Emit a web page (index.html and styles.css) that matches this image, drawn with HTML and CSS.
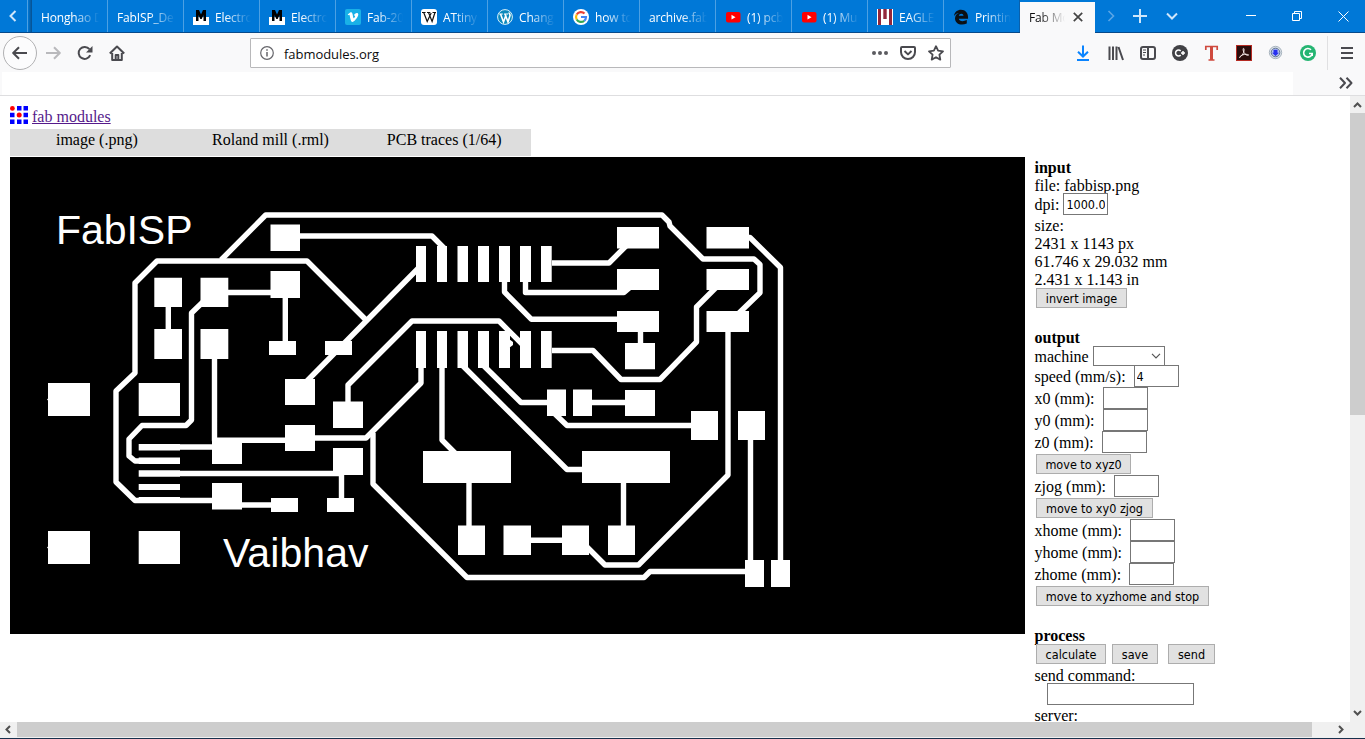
FILE: index.html
```
<!DOCTYPE html>
<html lang="en">
<head>
<meta charset="utf-8">
<title>Fab Modules</title>
<link rel="stylesheet" href="styles.css">
</head>
<body>
<header class="tabs">
  <div class="tabs-back"><svg width="8" height="12" viewBox="0 0 8 12"><path d="M6.5 1 1.5 6l5 5" class="line-light"/></svg></div>
  <div class="tabs-edge"></div>
  <div class="tab"><span class="label">Honghao D</span></div>
  <div class="tab"><span class="label">FabISP_De</span></div>
  <div class="tab"><svg class="fav" viewBox="0 0 16 16"><path d="M0 8h16v8H0z" fill="#fff"/><path d="M3 12V1h3l2 4.500 2-4.500h3v11h-2.500V6L8.700 10H7.300L5.500 6v6z" fill="#000"/></svg><span class="label">Electro</span></div>
  <div class="tab"><svg class="fav" viewBox="0 0 16 16"><path d="M0 8h16v8H0z" fill="#fff"/><path d="M3 12V1h3l2 4.500 2-4.500h3v11h-2.500V6L8.700 10H7.300L5.500 6v6z" fill="#000"/></svg><span class="label">Electro</span></div>
  <div class="tab"><svg class="fav" viewBox="0 0 16 16"><rect width="16" height="16" rx="2" fill="#19b1e7"/><path d="M2.700 5.500 5.500 3.300c1.500-.6 2 .8 2.500 4 .4 2 .7 2.500 1.500 1.200 1-1.500.8-2.400-.7-2 .8-2.700 4.700-3.800 4.500-.7-.3 2.600-4.500 7.500-6 7.300C5.500 12.600 5 7 4.500 5.900c-.3-.5-.8-.1-1.300.3z" fill="#fff"/></svg><span class="label">Fab-20</span></div>
  <div class="tab"><svg class="fav" viewBox="0 0 16 16"><rect width="16" height="16" rx="3" fill="#fff"/><path d="M1 3.500h3.600M6 3.500h3.300M11.500 3.500H15" stroke="#111" fill="none"/><path d="m2.700 3.500 3.500 9L10.200 4M7.500 3.500l3.600 9L14 3.500" stroke="#111" stroke-width="1.200" fill="none"/></svg><span class="label">ATtiny</span></div>
  <div class="tab"><svg class="fav" viewBox="0 0 16 16"><circle cx="8" cy="8" r="7.400" fill="#0d8abc" stroke="#d8f1fb"/><path d="M2.200 5h3.600M7 5h4" stroke="#fff" fill="none"/><path d="m3.500 5 3 8L9 6M8 5l3 8 2-6.500c.3-1-.8-1.500-1-3" stroke="#fff" stroke-width="1.600" fill="none"/></svg><span class="label">Chang</span></div>
  <div class="tab"><svg class="fav" viewBox="0 0 16 16"><circle cx="8" cy="8" r="8" fill="#fff"/><g fill="none" stroke-width="2.200"><path d="M11.500 4.500A5 5 0 0 0 3.700 5.500" stroke="#ea4335"/><path d="M3.700 5.500a5 5 0 0 0 0 5" stroke="#fbbc05"/><path d="M3.700 10.500a5 5 0 0 0 7.500 1.300" stroke="#34a853"/><path d="M11.200 11.800A5 5 0 0 0 13 8H8" stroke="#4285f4"/></g></svg><span class="label">how to</span></div>
  <div class="tab"><span class="label">archive.fab</span></div>
  <div class="tab"><svg class="fav" viewBox="0 0 16 16"><rect x="1" y="3" width="14.500" height="10.500" rx="2" fill="#f00"/><path d="m6.500 5.800 4 2.400-4 2.400z" fill="#fff"/></svg><span class="label">(1) pcb</span></div>
  <div class="tab"><svg class="fav" viewBox="0 0 16 16"><rect x="1" y="3" width="14.500" height="10.500" rx="2" fill="#f00"/><path d="m6.500 5.800 4 2.400-4 2.400z" fill="#fff"/></svg><span class="label">(1) Mu</span></div>
  <div class="tab"><svg class="fav" viewBox="0 0 16 16"><path d="M0 0h16v16H0z" fill="#fff"/><path d="M1 0h3v16H1zM6.300 0h3.400v10H6.300zM12 0h3v16h-3z" fill="#93263a"/></svg><span class="label">EAGLE</span></div>
  <div class="tab tab-last"><svg class="fav" viewBox="0 0 16 16"><path d="M15 9.800H5.800c.3 2.700 4.500 3.200 8 1.300v3.300C8.500 17 2 15 2 9.500c0-2.500 1.500-4.700 4-5.500-2.200.2-4 1.500-5 3C1.500 3 4.500.8 8 .8c4.800 0 7.500 3.700 7 9zM5.800 6.700h4.700c0-2.700-4.300-2.700-4.700 0z" fill="#0b1014"/></svg><span class="label">Printin</span></div>
  <div class="tab active"><span class="label">Fab Mo</span><svg width="10" height="10" viewBox="0 0 10 10"><path d="m.8.8 8.400 8.400M9.200.8.800 9.200" stroke="#444" stroke-width="1.700"/></svg></div>
  <div class="tab-tools">
    <svg width="8" height="12" viewBox="0 0 8 12"><path d="m1.500 1 5 5-5 5" class="line-light faint"/></svg>
    <svg width="14" height="14" viewBox="0 0 14 14"><path d="M7 0v14M0 7h14" class="line-light"/></svg>
    <svg width="12" height="8" viewBox="0 0 12 8"><path d="m1 1.500 5 5 5-5" class="line-light"/></svg>
  </div>
  <div class="window-tools">
    <svg width="10" height="10" viewBox="0 0 10 10"><path d="M0 4.500h10" class="thin"/></svg>
    <svg width="10" height="10" viewBox="0 0 10 10"><path d="M.5 2.500h7v7h-7zM2.500 2.500v-2h7v7h-2" class="thin"/></svg>
    <svg width="11" height="11" viewBox="0 0 11 11"><path d="m.5.500 10 10M10.500.5l-10 10" class="thin"/></svg>
  </div>
</header>

<nav class="toolbar">
  <div class="nav-buttons">
    <span class="back"><svg width="16" height="14" viewBox="0 0 16 14"><path d="M15 7H1.500M7 1.200 1.200 7 7 12.800" class="ico"/></svg></span>
    <svg width="16" height="14" viewBox="0 0 16 14"><path d="M1 7h13.500M9 1.200 14.800 7 9 12.800" class="ico pale"/></svg>
    <svg width="16" height="16" viewBox="0 0 16 16"><path d="M13.200 10.200a6 6 0 1 1-.8-6" class="ico"/><path d="M15.500 1v6.500H9z" fill="#4a4a4f"/></svg>
    <svg width="16" height="16" viewBox="0 0 16 16"><path d="M.8 8.500 8 1.500l7.200 7M3.200 8v7h9.600V8" class="ico"/><path d="M6.700 14.500V10h2.600v4.500" class="ico"/></svg>
  </div>
  <div class="url">
    <svg width="14" height="14" viewBox="0 0 14 14"><circle cx="7" cy="7" r="6.300" fill="none" stroke="#66666b" stroke-width="1.200"/><path d="M7 6v4.500M7 3.300v1.500" stroke="#66666b" stroke-width="1.500"/></svg>
    <span class="address">fabmodules.org</span>
    <svg width="16" height="4" viewBox="0 0 16 4"><g fill="#5b5b60"><circle cx="2" cy="2" r="2"/><circle cx="8" cy="2" r="2"/><circle cx="14" cy="2" r="2"/></g></svg>
    <svg width="16" height="14" viewBox="0 0 16 14"><path d="M2 1h12c.7 0 1 .3 1 1v4c0 4-3 7-7 7s-7-3-7-7V2c0-.7.3-1 1-1z" class="ico"/><path d="M4.500 5 8 8.400 11.500 5" class="ico"/></svg>
    <svg width="16" height="16" viewBox="0 0 16 16"><path d="m8 1.200 2.100 4.500 4.900.6-3.600 3.400.9 4.900L8 12.200l-4.300 2.400.9-4.900L1 6.300l4.900-.6z" class="ico star"/></svg>
  </div>
  <div class="addons">
    <svg viewBox="0 0 16 16"><path d="M7 .5v11M2 6.700l5 4.800 5-4.800M1 15h12" stroke="#0a84ff" stroke-width="2" fill="none"/></svg>
    <svg viewBox="0 0 16 16"><path d="M1.500 1.500V15M5 1.500V15M8.500 1.500V15M10.500 2 15 15" class="ico"/></svg>
    <svg viewBox="0 0 16 16"><rect x="1" y="2" width="14" height="12" rx="2" class="ico"/><path d="M8 2v12" class="ico"/><path d="M3 5h3M3 7.500h3M3 10h2" stroke="#4a4a4f"/></svg>
    <svg viewBox="0 0 16 16"><circle cx="8" cy="8" r="8" fill="#414145"/><path d="M8.700 5.900a3 3 0 1 0 0 4.200M9 8h4M11 6v4" stroke="#fff" stroke-width="1.500" fill="none"/></svg>
    <svg viewBox="0 0 16 16"><path d="M1.800 5V1.500h11.400V5M4.500 15h6" stroke="#cf4a3e" stroke-width="1.700" fill="none"/><path d="M7.500 1.500V15" stroke="#cf4a3e" stroke-width="3"/></svg>
    <svg viewBox="0 0 16 16"><rect x=".5" y=".5" width="15" height="15" fill="#2a0d0c" stroke="#b52a22"/><path d="M3.500 12.500C6 11 8.500 7 8 4.200 7.500 2 6.300 4.500 8 7.500c1.200 2 3 3.200 4.500 2.700 1-.6-2-1.200-4.500-.7-2 .4-4 1.500-4.500 3z" fill="none" stroke="#f5e9e8"/></svg>
    <svg viewBox="0 0 16 16"><circle cx="7.500" cy="7.500" r="6.200" fill="#dce2e8" stroke="#a9b5bf"/><circle cx="7.500" cy="7.500" r="4.300" fill="#b7c4ef" stroke="#5d7390"/><path d="M5.500 4.700h4v3H11L7.500 11 4 7.700h1.500z" fill="#2730f0"/></svg>
    <svg viewBox="0 0 16 16"><circle cx="8" cy="8" r="8" fill="#25b572"/><path d="M11 4.800a4.300 4.300 0 1 0 1.200 3.700H9M12.200 8.500v2.500" stroke="#fff" stroke-width="1.600" fill="none"/></svg>
  </div>
  <div class="menu"><svg width="12" height="12" viewBox="0 0 12 12"><path d="M0 1h12M0 6h12M0 11h12" class="ico"/></svg></div>
</nav>
<div class="bookmarks"><div class="bookmarks-blank"></div><svg width="14" height="12" viewBox="0 0 14 12"><path d="m1 .8 5 5.200-5 5.200M7.500.8l5 5.200-5 5.200" class="ico"/></svg></div>

<div class="viewport">
  <main class="page">
    <div class="brand">
      <svg width="18" height="18" viewBox="0 0 18 18"><path d="M7 0h4.500v4.500H7zM13.500 0H18v4.500h-4.500zM0 6.800h4.500v4.500H0zM13.500 6.800H18v4.500h-4.500zM0 13.500h4.500V18H0zM7 13.500h4.500V18H7zM13.500 13.500H18V18h-4.500z" fill="#00f"/><circle cx="2.400" cy="2.400" r="2.400" fill="#f00"/><circle cx="9.200" cy="9.100" r="2.500" fill="#f00"/></svg>
      <a href="#">fab modules</a>
    </div>
    <div class="steps"><span>image (.png)</span><span>Roland mill (.rml)</span><span>PCB traces (1/64)</span></div>
    <div class="work">
      <svg class="board" viewBox="10 157 1015 477">
        <rect x="10" y="157" width="1015" height="477" fill="#000"/>
        <g class="trace">
          <path d="M221 260 265.700 215H662l7 7 1 4 33 33h51l6 5.500v28.200L738 314"/>
          <path d="m366 320-59-59H157l-22 22v90l-19 18v91l19 18.500h77"/>
          <path d="m206 299-14.500 14v107l-5.500 5.500h-44L129 439v17l6 5h30M180 447h36M214.500 359v81.300H290M180 473.500h163M242 505h30M168.300 307v23M228 292.500h43M285.300 298v43"/>
          <path d="M300 236h132l13 13M420 266.500 306 382M348 402v-17l64-64h87l25 25M421 368v15l-55 55h-51M341.500 475v23"/>
          <path d="M373 433v51l94 93.500h177l6-6h95M442 368v72l13 13M469 483v43M531 540.300h32M623.500 483v43M462 365l105 104.500h16M483 365l38 37.500h27M592 402.500h34M555 414l12 11.500h125M750.500 440v121M747 237.500h3l30.500 30V561"/>
          <path d="M552 263h57l20-20M525.500 282v10.500H624l7-6M504.500 282v10l27 27.300h86M640.500 332v12M552 350.500h41l28 29h39l36.500-37.500v-35l22-22M728 332v143l-89.500 90H605l-18-18"/>
        </g>
        <g class="pad">
          <path d="M154.300 277.700h27.700v29.300h-27.700zM154.300 329h27.700v30h-27.700zM200.500 277.700h27.800v29.300h-27.800zM200.500 329h27.800v30h-27.800zM48 383h42v33H48zM138.700 383H180v33h-41.300zM48 531h42v33H48zM138.700 531H180v33h-41.300z"/>
          <path d="M138.700 444H180v6.500h-41.300zM138.700 457.500H180v6.500h-41.300zM138.700 470.300H180v6.500h-41.300zM138.700 484H180v6h-41.300zM138.700 497H180v6h-41.300zM212 440h30v24h-30zM212 483h30v26.500h-30z"/>
          <path d="M270.500 224.500H300V251h-29.500zM270.500 271H300v27h-29.500zM269 341h27v14h-27zM325 341h27v14h-27zM285 379h30v26h-30zM333 401.500h30V428h-30zM285 425h30v26h-30zM333 448h30v27h-30zM271 498h27v14h-27zM327 498h27v14h-27z"/>
          <path d="M416 246h10v36h-10zM437 246h10v36h-10zM457.500 246H468v36h-10.500zM478 246h11v36h-11zM499 246h11v36h-11zM520 246h11v36h-11zM541 246h10.700v36H541zM416 331h10v37h-10zM437 331h10v37h-10zM457.500 331H468v37h-10.500zM478 331h11v37h-11zM499 331h11v37h-11zM520 331h11v37h-11zM541 331h10.700v37H541zM509 339l4 3v3l-4 3z"/>
          <path d="M423 451h88v32h-88zM582 451h88v32h-88zM458 525.500h27V555h-27zM503.500 525.500H531V555h-27.500zM562 525.500h27V555h-27zM608 525.500h27V555h-27zM547 389.500h19V416h-19zM573 389.500h19V416h-19zM625 390h30v26h-30zM625 343h30v26.300h-30zM691 411h27v29h-27zM738 411h27v29h-27zM745 560h19v27h-19zM771 560h19v27h-19z"/>
          <path d="M617 227h42v21.500h-42zM617 269h42v21h-42zM617 311h42v21h-42zM706.500 227H749v21.500h-42.500zM706.500 269H749v21h-42.500zM706.500 311H749v21h-42.500z"/>
          <path d="M47 399.500l2-2v4zM47 547.500l2-2v4z"/>
        </g>
        <text x="56" y="244" textLength="136.500" class="silk">FabISP</text>
        <text x="223" y="567" textLength="145.500" class="silk">Vaibhav</text>
      </svg>
      <aside class="panel">
        <div class="row"><b>input</b></div>
        <div class="row">file: fabbisp.png</div>
        <div class="row field dpi">dpi: <input value="1000.0"></div>
        <div class="row">size:</div>
        <div class="row">2431 x 1143 px</div>
        <div class="row">61.746 x 29.032 mm</div>
        <div class="row">2.431 x 1.143 in</div>
        <div class="row actions"><button class="w91">invert image</button></div>
        <div class="row gap"><b>output</b></div>
        <div class="row machine">machine <span class="select"><svg width="10" height="6" viewBox="0 0 10 6"><path d="m1 .8 4 4 4-4" fill="none" stroke="#555" stroke-width="1.200"/></svg></span></div>
        <div class="row field">speed (mm/s):&nbsp; <input value="4"></div>
        <div class="row field">x0 (mm):&nbsp; <input></div>
        <div class="row field">y0 (mm):&nbsp; <input></div>
        <div class="row field">z0 (mm):&nbsp; <input></div>
        <div class="row field"><button class="w95">move to xyz0</button></div>
        <div class="row field">zjog (mm):&nbsp; <input></div>
        <div class="row field"><button class="w117">move to xy0 zjog</button></div>
        <div class="row field">xhome (mm):&nbsp; <input></div>
        <div class="row field">yhome (mm):&nbsp; <input></div>
        <div class="row field">zhome (mm):&nbsp; <input></div>
        <div class="row field"><button class="w173">move to xyzhome and stop</button></div>
        <div class="row gap process"><b>process</b></div>
        <div class="row actions"><button class="w70">calculate</button><button class="save">save</button><button class="send">send</button></div>
        <div class="row command">send command:</div>
        <div class="row command-field"><input></div>
        <div class="row server">server:</div>
      </aside>
    </div>
  </main>
  <div class="vscroll">
    <svg width="9" height="6" viewBox="0 0 9 6"><path d="m1 5 3.500-3.500L8 5" class="arrow"/></svg>
    <div class="vthumb"></div>
    <svg width="9" height="6" viewBox="0 0 9 6"><path d="m1 1 3.500 3.500L8 1" class="arrow"/></svg>
  </div>
</div>
<div class="hscroll">
  <svg width="6" height="9" viewBox="0 0 6 9"><path d="M5 1 1.500 4.500 5 8" class="arrow"/></svg>
  <div class="hthumb"></div>
  <svg width="6" height="9" viewBox="0 0 6 9"><path d="m1 1 3.500 3.500L1 8" class="arrow"/></svg>
</div>
</body>
</html>
```
FILE: styles.css
```
* { box-sizing: border-box; }
body {
  margin: 0;
  width: 1365px;
  height: 739px;
  overflow: hidden;
  display: flex;
  flex-direction: column;
  background: #fff;
  border-bottom: 1px solid #17304c;
  font-family: "Liberation Serif", serif;
  font-size: 16px;
}
svg { display: block; flex: none; }
.ico { fill: none; stroke: #4a4a4f; stroke-width: 2; stroke-linejoin: round; }
.pale { stroke: #b9b9bc; }
.star { stroke-width: 1.8; }

.tabs {
  display: flex;
  height: 33px;
  flex: none;
  background: #0078d7;
  border-bottom: 1px solid #06498a;
  color: #fff;
  font: 12px "Open Sans", sans-serif;
}
.line-light { fill: none; stroke: #cfe6fa; stroke-width: 2; }
.faint { stroke: #5aa6e6; stroke-width: 1.6; }
.thin { fill: none; stroke: #fff; stroke-width: 1; }
.tabs-back {
  width: 28px;
  padding: 10px 0 0 9px;
  border-right: 1px solid #4ca0e3;
}
.tabs-edge { width: 4px; background: linear-gradient(90deg, #0078d7, #07508f); }
.tab {
  width: 76px;
  padding: 2px 4px 0 9px;
  display: flex;
  align-items: center;
  gap: 6px;
  border-right: 1px solid #4ca0e3;
}
.fav { width: 16px; height: 16px; }
.label {
  flex: 1;
  min-width: 0;
  overflow: hidden;
  white-space: pre;
  font-weight: 500;
  letter-spacing: -0.15px;
  -webkit-mask-image: linear-gradient(90deg, #000 calc(100% - 30px), transparent calc(100% - 4px));
  mask-image: linear-gradient(90deg, #000 calc(100% - 30px), transparent calc(100% - 4px));
}
.tab-last { border-right-color: #0a60ab; }
.active {
  margin: 2px 0 -1px;
  width: 75px;
  padding: 0 12px 1px 9px;
  gap: 4px;
  background: #f9f9fa;
  color: #0c0c0d;
  border: 0;
}
.tab-tools { display: flex; align-items: center; gap: 19px; padding-left: 12px; width: 151px; }
.tab-tools svg:nth-child(2) { margin-left: -1px; }
.window-tools { display: flex; align-items: center; gap: 36px; }

.toolbar {
  display: flex;
  align-items: center;
  height: 38px;
  flex: none;
  padding-top: 1px;
  background: #f9f9fa;
}
.nav-buttons { display: flex; align-items: center; gap: 16px; width: 250px; padding-left: 3px; }
.back {
  width: 34px;
  height: 34px;
  display: grid;
  place-items: center;
  border: 1px solid #b1b1b3;
  border-radius: 50%;
  background: #fcfcfd;
  margin-right: -8px;
}
.url {
  width: 701px;
  height: 30px;
  margin-top: 1px;
  padding: 0 6px 0 9px;
  display: flex;
  align-items: center;
  border: 1px solid #b8b8ba;
  border-radius: 1px;
  background: #fff;
  gap: 12px;
}
.address { flex: 1; margin-left: -2px; padding-top: 1px; font: 13px "Open Sans", sans-serif; letter-spacing: -0.05px; color: #0c0c0d; }
.addons { display: flex; gap: 16px; margin-left: 125px; }
.addons svg { width: 16px; height: 16px; }
.menu { margin-left: 11px; padding-left: 13px; height: 34px; display: flex; align-items: center; border-left: 1px solid #e0e0e2; }
.bookmarks {
  display: flex;
  align-items: center;
  height: 25px;
  flex: none;
  background: #f9f9fa;
  border-bottom: 1px solid #dedee0;
}
.bookmarks-blank { width: 1291px; height: 23px; margin: 0 46px 0 2px; background: #fff; }

.viewport { display: flex; height: 626px; flex: none; }
.page { width: 1350px; overflow: hidden; padding: 10px 0 0 10px; }
.brand { display: flex; gap: 4px; height: 23px; line-height: 22px; }
.brand a { color: #551a8b; }
.steps {
  display: grid;
  grid-template-columns: repeat(3, 1fr);
  width: 521px;
  height: 27px;
  padding-top: 2px;
  background: #ddd;
  text-align: center;
  line-height: 18px;
}
.work { display: flex; gap: 10px; margin-top: 1px; }
.board { width: 1015px; height: 477px; }
.trace { fill: none; stroke: #fff; stroke-width: 5.4; stroke-linejoin: round; }
.pad { fill: #fff; }
.silk { fill: #fff; font: 41px "Liberation Sans", sans-serif; }

.panel { width: 300px; padding-top: 2px; margin-left: -0.5px; }
.row { height: 18px; line-height: 18px; display: flex; align-items: center; white-space: pre; }
.field { height: 22px; }
.gap { margin-top: 20px; }
.process { margin-top: 19px; }
.panel input {
  width: 45px;
  height: 22px;
  margin: -2px 0 0;
  padding: 0 2px;
  border: 1px solid #777;
  background: #fff;
  font: 12.5px "DejaVu Sans Condensed", "DejaVu Sans", sans-serif;
  font-stretch: condensed;
}
.dpi { align-items: flex-start; line-height: 20px; }
.panel .dpi input { margin-top: -2px; }
.panel button {
  height: 20px;
  margin: -2px 0 0 1.5px;
  padding: 1px 0 0;
  border: 1px solid #adadad;
  background: #e1e1e1;
  color: #000;
  font: 12.5px "DejaVu Sans Condensed", "DejaVu Sans", sans-serif;
  font-stretch: condensed;
  line-height: 17px;
}
.actions { height: 20px; }
.w91 { width: 91px; }
.w95 { width: 95px; }
.w117 { width: 117px; }
.w173 { width: 173px; }
.w70 { width: 70px; }
.panel .save { width: 46px; margin-left: 6px; }
.panel .send { width: 47px; margin-left: 10px; }
.machine { height: 19px; }
.select {
  width: 72px;
  height: 20px;
  margin-top: -2px;
  padding-right: 3px;
  display: flex;
  align-items: center;
  justify-content: flex-end;
  border: 1px solid #777;
}
.command { margin-top: 2px; }
.command-field { height: 20px; padding-left: 12.5px; }
.panel .command-field input { width: 147px; }
.server { margin-top: 2px; }

.vscroll {
  width: 15px;
  display: flex;
  flex-direction: column;
  align-items: center;
  background: #f0f0f0;
  padding: 6px 0;
}
.vthumb { width: 15px; height: 302px; margin: 5px 0 auto; background: #cdcdcd; }
.arrow { fill: none; stroke: #505050; stroke-width: 2; }
.hscroll { height: 16px; flex: none; display: flex; align-items: center; background: #f0f0f0; padding: 0 21px 1px 5px; }
.hthumb { width: 1295px; height: 15px; margin: 0 auto 0 6px; background: #cdcdcd; }
```
